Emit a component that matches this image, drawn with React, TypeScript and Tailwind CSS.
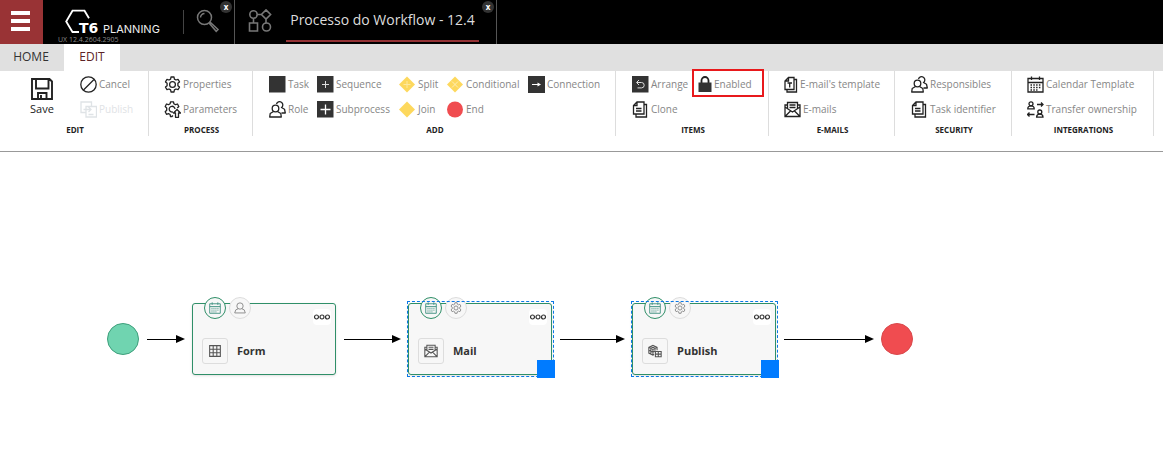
import React from 'react';

interface IconProps {
  className?: string;
}

type IconType = React.FC<IconProps>;

const stroke = {
  fill: 'none',
  stroke: 'currentColor',
  strokeWidth: 1.3,
} as const;

const SaveIcon: IconType = ({ className }) => (
  <svg viewBox="0 0 22 22" className={className} fill="none" stroke="currentColor" strokeWidth="1.9">
    <path d="M1 1h17.5L21 3.5V21H1zM5 1v9.5h12.5V1M7 21v-6h8.5v6" />
    <path d="M10 17v4" />
  </svg>
);

const CancelIcon: IconType = ({ className }) => (
  <svg viewBox="0 0 17 17" className={className} {...stroke}>
    <circle cx="8.5" cy="8.5" r="7.7" />
    <path d="M3.5 14 14 3.5" />
  </svg>
);

const PublishIcon: IconType = ({ className }) => (
  <svg viewBox="0 0 17 17" className={className} {...stroke}>
    <path d="M6 11.5H1V1h10.5v4M6 5.5h10.5V16H6zM3.5 8.5H11M8.5 6 11 8.5 8.5 11M8.5 13.5h5" />
  </svg>
);

const GearIcon: IconType = ({ className }) => (
  <svg viewBox="0 0 17 17" className={className} {...stroke} strokeLinejoin="round">
    <path d="M7 1h3l.4 2.1 1.6.9 2-.7 1.5 2.6-1.6 1.4v2.4l1.6 1.4-1.5 2.6-2-.7-1.6.9L10 16H7l-.4-2.1L5 13l-2 .7-1.5-2.6 1.6-1.4V7.3L1.5 5.9 3 3.3l2 .7 1.6-.9z" />
    <circle cx="8.5" cy="8.5" r="2.9" />
  </svg>
);

const GearUpIcon: IconType = ({ className }) => (
  <svg viewBox="0 0 17 17" className={className} {...stroke} strokeLinejoin="round">
    <path d="M9 14.5 8 15.5H6.5l-.4-2-1.6-.8-2 .6-1.3-2.5 1.5-1.5V7L1.2 5.5 2.5 3l2 .7 1.6-.9.4-2h3l.4 2 1.6.9 2-.7 1.3 2.5-1.5 1.5" />
    <path d="M9 10.9A2.9 2.9 0 1 1 11 8" />
    <path d="M13 8.5 9.5 12h2v4.3h3V12h2z" />
  </svg>
);

const TaskIcon: IconType = ({ className }) => (
  <svg viewBox="0 0 17 17" className={className}>
    <path d="M0 0h16.5v16.5H0z" fill="#333" />
  </svg>
);

const SequenceIcon: IconType = ({ className }) => (
  <svg viewBox="0 0 17 17" className={className}>
    <path d="M0 0h16.5v16.5H0z" fill="#333" />
    <path d="M8.5 5v7M5 8.5h7" stroke="#ddd" />
  </svg>
);

const SubprocessIcon: IconType = ({ className }) => (
  <svg viewBox="0 0 17 17" className={className}>
    <path d="M0 0h16.5v16.5H0z" fill="#333" />
    <path d="M8.5 3.5v10M3.5 8.5h10" stroke="#fff" strokeWidth="1.3" />
  </svg>
);

const ConnectionIcon: IconType = ({ className }) => (
  <svg viewBox="0 0 17 17" className={className}>
    <path d="M0 0h17v17H0z" fill="#333" />
    <path d="M4 8.5h6" stroke="#fff" />
    <path d="m9.5 6.5 3.5 2-3.5 2z" fill="#fff" />
  </svg>
);

const ArrangeIcon: IconType = ({ className }) => (
  <svg viewBox="0 0 17 17" className={className}>
    <path d="M0 0h16.5v16.5H0z" fill="#333" />
    <path d="M7 4 4.5 6.5 7 9M5 6.5h4.5a2.7 2.7 0 0 1 0 5.4h-4" fill="none" stroke="#ddd" />
  </svg>
);

const SplitIcon: IconType = ({ className }) => (
  <svg viewBox="0 0 17 17" className={className}>
    <path d="m8 .5 8 8-8 8-8-8z" fill="#fdd85d" />
    <path d="M8 5v7M4.5 8.5h7" stroke="#fde9a0" />
  </svg>
);

const ConditionalIcon: IconType = ({ className }) => (
  <svg viewBox="0 0 17 17" className={className}>
    <path d="m8 .5 8 8-8 8-8-8z" fill="#fdd85d" />
    <path d="m5 5.5 6 6M11 5.5l-6 6" stroke="#fdeeb5" />
  </svg>
);

const JoinIcon: IconType = ({ className }) => (
  <svg viewBox="0 0 17 17" className={className}>
    <path d="m8 .5 8 8-8 8-8-8z" fill="#fdd85d" />
  </svg>
);

const EndIcon: IconType = ({ className }) => (
  <svg viewBox="0 0 17 17" className={className}>
    <circle cx="8" cy="8.5" r="8" fill="#f04c50" />
  </svg>
);

const PeopleIcon: IconType = ({ className }) => (
  <svg viewBox="0 0 17 17" className={className} {...stroke} strokeLinejoin="round">
    <circle cx="6.5" cy="7.5" r="3.3" />
    <path d="m4.5 10.5-3.3 2L.7 16h11.6l-.5-3.5-3.3-2" />
    <path d="M7.5 3.2a3.2 3.2 0 1 1 5 3.3l3 1.7.8 3.8h-3.8" />
  </svg>
);

const PersonIcon: IconType = ({ className }) => (
  <svg viewBox="0 0 17 17" className={className} {...stroke} strokeLinejoin="round">
    <circle cx="8.5" cy="5.7" r="4.5" />
    <path d="m6 9.5-3.5 1.7L1 15.5h15l-1.5-4.3L11 9.5" />
  </svg>
);

const CloneIcon: IconType = ({ className }) => (
  <svg viewBox="0 0 17 17" className={className} {...stroke}>
    <path d="M5 1h7v12H1.5V4.5zM5 1v3.5H1.5M12.5 3.5h2V16H4v-2.5M4 7.5h5.5M4 10h5.5" />
  </svg>
);

const TemplateIcon: IconType = ({ className }) => (
  <svg viewBox="0 0 14 17" className={className} {...stroke}>
    <path d="M4.5 1.5H10v12H1V5zM4.5 1.5V5H1M10.5 3.5h2V16H3v-2M3.5 7H8M5.7 7v4.5" />
  </svg>
);

const LockIcon: IconType = ({ className }) => (
  <svg viewBox="0 0 14 17" className={className}>
    <path d="M3.5 8V4.5a3.5 3.5 0 0 1 7 0V8" fill="none" stroke="#222" strokeWidth="1.8" />
    <path d="M.5 6.5h13V16H.5z" fill="#333" />
  </svg>
);

const MailIcon: IconType = ({ className }) => (
  <svg viewBox="0 0 17 17" className={className} {...stroke}>
    <path d="M3 4H1v11.5h15V4h-2M3.5 8V1.5h10V8M1 6l7.5 5L16 6M1 15.5 6.5 10M16 15.5 10.5 10M5.5 4h6M5.5 6.5h6" />
  </svg>
);

const CalendarIcon: IconType = ({ className }) => (
  <svg viewBox="0 0 17 17" className={className} {...stroke}>
    <path d="M1 2.5h15V16H1zM1 6.5h15M4.5.5V4M12.5.5V4" />
    <path d="M3.5 9h10M3.5 11.5h10M3.5 14h7" strokeDasharray="1.5 1.3" />
  </svg>
);

const TransferIcon: IconType = ({ className }) => (
  <svg viewBox="0 0 17 17" className={className} {...stroke}>
    <circle cx="4" cy="2.8" r="2" />
    <path d="M.8 7.8c0-2 1.2-3 3.2-3s3.2 1 3.2 3z" />
    <circle cx="12.8" cy="11" r="2" />
    <path d="M9.6 16.2c0-2 1.2-3 3.2-3s3.2 1 3.2 3zM10 3.5h6M14 1.5l2 2-2 2M7.5 13.5h-7M2.5 11.5l-2 2 2 2" />
  </svg>
);

const GridIcon: IconType = ({ className }) => (
  <svg viewBox="0 0 17 17" className={className} {...stroke}>
    <path d="M2 2h13v13H2zM2 6.3h13M2 10.7h13M6.3 2v13M10.7 2v13" />
  </svg>
);

const CubeIcon: IconType = ({ className }) => (
  <svg viewBox="0 0 17 17" className={className} {...stroke}>
    <path d="M7.5 12.8 6 13.5 1 11V4l5-2.5L11 4v3.5M1 4l5 2.5L11 4M6 6.5v7M3.5 2.8l5 2.5v3M8.5 2.8l-5 2.5v7M1 7.5 6 10l2.5-1.3" />
    <path d="M9 9h7v6.5H9zM9 12.3h7M12.5 9v6.5" />
  </svg>
);

const Logo: IconType = ({ className }) => (
  <svg viewBox="0 0 100 28" className={className} role="img" aria-label="T6 Planning">
    <path d="M15 24H8.5L2.2 13.5 8.5 2.7h12l4.5 7.5" fill="none" stroke="#fff" strokeWidth="1.8" />
    <text x="15" y="25" fill="#fff" fontFamily="DejaVu Sans, sans-serif" fontSize="14" fontWeight="700">
      T6
    </text>
    <text x="39" y="25" fill="#eee" fontFamily="Inter, sans-serif" fontSize="11">
      PLANNING
    </text>
  </svg>
);

const SearchIcon: IconType = ({ className }) => (
  <svg viewBox="0 0 24 24" className={className} fill="none" stroke="currentColor" strokeWidth="1.5">
    <circle cx="8.5" cy="8.5" r="7" />
    <path d="M4.5 8.5a4 4 0 0 1 4-4M13.5 14.5l1-1 7.500 7-1.800 1.800z" />
  </svg>
);

const WorkflowIcon: IconType = ({ className }) => (
  <svg viewBox="0 0 24 24" className={className} fill="none" stroke="currentColor" strokeWidth="1.6">
    <circle cx="5.5" cy="5.5" r="3.7" />
    <path d="m18 .9 4.6 4.6-4.6 4.6-4.6-4.6zM9.2 5.5h4.200M5.500 9.200V14M18 10.100V14M1.500 14h8v8h-8z" />
    <circle cx="18.5" cy="18" r="4" />
  </svg>
);

interface Action {
  label: string;
  icon: IconType;
  narrow?: boolean;
  disabled?: boolean;
  highlighted?: boolean;
}

interface Group {
  title: string;
  className: string;
  columns: string;
  actions: Action[];
}

const groups: Group[] = [
  {
    title: 'PROCESS',
    className: 'w-[104px]',
    columns: 'grid-cols-1 pl-[15px]',
    actions: [
      { label: 'Properties', icon: GearIcon },
      { label: 'Parameters', icon: GearUpIcon },
    ],
  },
  {
    title: 'ADD',
    className: 'w-[363px]',
    columns: 'grid-cols-[48px_82px_48px_81px_87px] pl-4',
    actions: [
      { label: 'Task', icon: TaskIcon },
      { label: 'Sequence', icon: SequenceIcon },
      { label: 'Split', icon: SplitIcon },
      { label: 'Conditional', icon: ConditionalIcon },
      { label: 'Connection', icon: ConnectionIcon },
      { label: 'Role', icon: PeopleIcon },
      { label: 'Subprocess', icon: SubprocessIcon },
      { label: 'Join', icon: JoinIcon },
      { label: 'End', icon: EndIcon },
    ],
  },
  {
    title: 'ITEMS',
    className: 'w-[153px]',
    columns: 'grid-cols-[66px_70px] pl-4',
    actions: [
      { label: 'Arrange', icon: ArrangeIcon },
      { label: 'Enabled', icon: LockIcon, narrow: true, highlighted: true },
      { label: 'Clone', icon: CloneIcon },
    ],
  },
  {
    title: 'E-MAILS',
    className: 'w-[126px]',
    columns: 'grid-cols-1 pl-[15px]',
    actions: [
      { label: "E-mail's template", icon: TemplateIcon, narrow: true },
      { label: 'E-mails', icon: MailIcon },
    ],
  },
  {
    title: 'SECURITY',
    className: 'w-[117px]',
    columns: 'grid-cols-1 pl-4',
    actions: [
      { label: 'Responsibles', icon: PeopleIcon },
      { label: 'Task identifier', icon: CloneIcon },
    ],
  },
  {
    title: 'INTEGRATIONS',
    className: 'w-[142px]',
    columns: 'grid-cols-1 pl-[15px]',
    actions: [
      { label: 'Calendar Template', icon: CalendarIcon },
      { label: 'Transfer ownership', icon: TransferIcon },
    ],
  },
];

const ActionButton: React.FC<{ action: Action }> = ({ action }) => {
  const Icon = action.icon;
  return (
    <button
      type="button"
      disabled={action.disabled}
      className={`relative flex h-[25px] items-center gap-0.5 text-[10px] whitespace-nowrap ${
        action.disabled ? 'text-[#dfe3e6]' : 'text-[#868686]'
      }`}
    >
      <Icon
        className={`h-[17px] shrink-0 ${action.narrow ? 'w-[14px]' : 'w-[17px]'} ${
          action.disabled ? '' : 'text-[#222]'
        }`}
      />
      {action.label}
      {action.highlighted && (
        <span className="absolute -top-[3px] -left-1.5 h-7 w-[72px] border-2 border-[#e8191c]" />
      )}
    </button>
  );
};

const GroupTitle: React.FC<{ children: React.ReactNode }> = ({ children }) => (
  <h2 className="mt-[3px] pl-0.5 text-center text-[8px] leading-[10px] font-bold text-[#222]">{children}</h2>
);

const CloseButton = () => (
  <button
    type="button"
    aria-label="Close"
    className="absolute top-px right-0.5 flex size-3 items-center justify-center rounded-full bg-[#333] text-[8px] leading-none font-bold text-white"
  >
    x
  </button>
);

const Header = () => (
  <header className="flex h-11 bg-black">
    <button
      type="button"
      aria-label="Menu"
      className="flex w-[43px] flex-col items-center justify-center gap-1 bg-[#993335] pr-0.5 pb-0.5"
    >
      <span className="h-1 w-[19px] bg-white" />
      <span className="h-1 w-[19px] bg-white" />
      <span className="h-1 w-[19px] bg-white" />
    </button>
    <div className="w-[140px] pt-2 pl-[15px]">
      <Logo className="ml-1.5 h-7 w-[100px]" />
      <p className="text-[7px] leading-[8px] text-[#888]">UX 12.4.2604.2905</p>
    </div>
    <div className="relative flex w-[52px] items-center border-r border-[#555]">
      <span className="h-6 w-px bg-[#444]" />
      <button type="button" aria-label="Search" className="ml-3 pb-0.5 text-[#777]">
        <SearchIcon className="size-6" />
      </button>
      <CloseButton />
    </div>
    <div className="relative flex w-[262px] border-r border-[#555] pr-[17px] pl-[13px]">
      <WorkflowIcon className="mt-[9px] size-6 shrink-0 text-[#777]" />
      <h1 className="ml-[14px] h-[42px] flex-1 border-b-2 border-[#943235] text-center text-[14px] leading-[40px] whitespace-nowrap text-[#ddd]">
        Processo do Workflow - 12.4
      </h1>
      <CloseButton />
    </div>
  </header>
);

const Ribbon = () => (
  <div className="flex h-[81px] border-b border-[#999]">
    <section className="h-[65px] w-[149px] shrink-0 border-r border-[#ddd]">
      <div className="flex h-[51px] pt-px">
        <button
          type="button"
          className="ml-[30px] flex w-6 flex-col items-center pt-1.5 text-[11px] leading-[18px] text-[#222]"
        >
          <SaveIcon className="size-[22px] shrink-0" />
          Save
        </button>
        <div className="ml-[26px]">
          <ActionButton action={{ label: 'Cancel', icon: CancelIcon }} />
          <ActionButton action={{ label: 'Publish', icon: PublishIcon, disabled: true }} />
        </div>
      </div>
      <GroupTitle>EDIT</GroupTitle>
    </section>
    {groups.map((group) => (
      <section key={group.title} className={`h-[65px] shrink-0 border-r border-[#ddd] ${group.className}`}>
        <div className={`grid pt-px ${group.columns}`}>
          {group.actions.map((action) => (
            <ActionButton key={action.label} action={action} />
          ))}
        </div>
        <GroupTitle>{group.title}</GroupTitle>
      </section>
    ))}
  </div>
);

interface TaskNodeProps {
  label: string;
  icon: IconType;
  badge: IconType;
  position: string;
  selected?: boolean;
}

const TaskNode: React.FC<TaskNodeProps> = ({ label, icon: Icon, badge: Badge, position, selected }) => (
  <div
    className={`absolute top-[151px] h-[72px] w-36 rounded-[3px] border border-[#2f8f68] bg-[#f7f7f7] shadow-sm ${position}`}
  >
    <div className="absolute -top-[7px] left-[11px] flex gap-[3px]">
      <span className="flex size-[22px] items-center justify-center rounded-full border border-[#2f8f68] bg-[#f7f7f7] text-[#3f9080]">
        <CalendarIcon className="size-3" />
      </span>
      <span className="flex size-[22px] items-center justify-center rounded-full border border-[#ddd] bg-[#f7f7f7] text-[#888]">
        <Badge className="size-3" />
      </span>
    </div>
    {selected && (
      <span className="absolute -top-[3px] -right-[3px] -bottom-[3px] -left-0.5 border border-dashed border-[#0b78e6]" />
    )}
    <button
      type="button"
      aria-label={`${label} options`}
      className="absolute top-[5px] right-1 flex h-4 w-[18px] items-center justify-center rounded-sm bg-white"
    >
      <svg viewBox="0 0 18 6" className="h-1.5 w-[18px]" fill="none" stroke="#333" strokeWidth="1.2">
        <circle cx="3.5" cy="3" r="2" />
        <circle cx="9" cy="3" r="2" />
        <circle cx="14.5" cy="3" r="2" />
      </svg>
    </button>
    <div className="flex items-center gap-[9px] pt-[34px] pl-[9px]">
      <span className="flex size-[26px] items-center justify-center rounded-[3px] border border-[#ddd] text-[#555]">
        <Icon className="size-3.5" />
      </span>
      <span className="text-[11px] font-bold text-[#333]">{label}</span>
    </div>
    {selected && <span className="absolute -right-1 -bottom-1 size-[18px] bg-[#007bff]" />}
  </div>
);

const arrows = [
  { from: 147, to: 185 },
  { from: 344, to: 401 },
  { from: 560, to: 625 },
  { from: 784, to: 874 },
];

const Canvas = () => (
  <main className="relative min-h-[305px] overflow-hidden">
    <svg className="absolute top-0 left-0 h-[305px] w-[920px]">
      <circle cx="123" cy="187" r="15.5" fill="#70d4b0" stroke="#3f9f7c" />
      <circle cx="897" cy="187" r="15.5" fill="#f04c50" stroke="#d9494c" />
      {arrows.map(({ from, to }) => (
        <g key={from}>
          <path d={`M${from} 187.5H${to - 8}`} stroke="#000" />
          <path d={`M${to} 187l-9-4v8z`} />
        </g>
      ))}
    </svg>
    <TaskNode label="Form" icon={GridIcon} badge={PersonIcon} position="left-[192px]" />
    <TaskNode label="Mail" icon={MailIcon} badge={GearIcon} position="left-[408px]" selected />
    <TaskNode label="Publish" icon={CubeIcon} badge={GearIcon} position="left-[632px]" selected />
  </main>
);

const App = () => {
  return (
    <div className="min-h-screen bg-white [font-family:'Open_Sans','Noto_Sans',sans-serif]">
      <Header />
      <nav className="flex h-[27px] bg-[#e0e0e0] text-[12px]">
        <button type="button" className="w-16 pr-0.5 pb-0.5 text-[#333]">
          HOME
        </button>
        <button type="button" className="w-14 bg-white pb-0.5 text-[#5c2326]">
          EDIT
        </button>
      </nav>
      <Ribbon />
      <Canvas />
    </div>
  );
};

export default App;
